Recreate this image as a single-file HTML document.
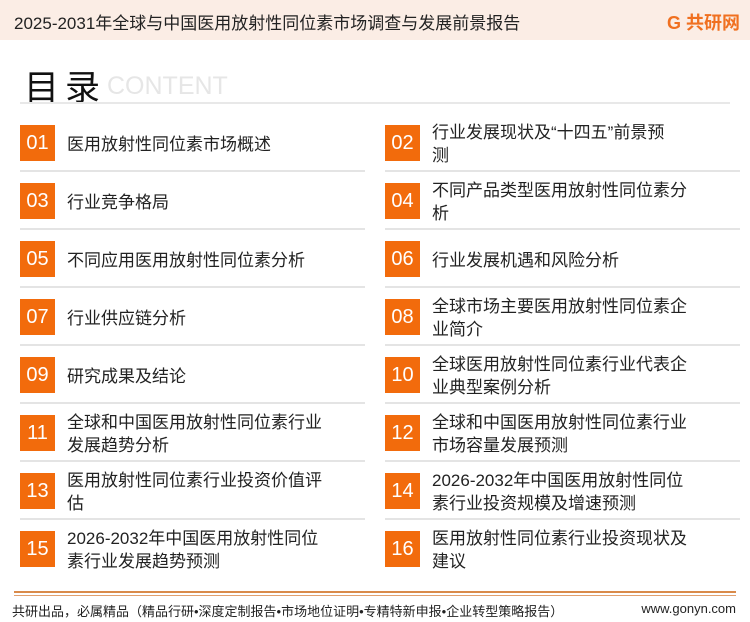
<!DOCTYPE html>
<html><head><meta charset="utf-8"><style>
*{margin:0;padding:0;box-sizing:border-box}
body{width:750px;height:622px;background:#fff;position:relative;overflow:hidden;font-family:"Liberation Sans","Noto Sans CJK SC",sans-serif;color:#222}
.hd{position:absolute;left:0;top:0;width:750px;height:40px;background:#fbede5}
.hd .t{position:absolute;left:14px;top:9px;font-size:17px;color:#222}
.logo{position:absolute;right:10px;top:9px;font-size:18px;font-weight:bold;color:#f07020}
.mulu{position:absolute;left:24px;top:60px;font-size:35px;color:#111;letter-spacing:6px}
.ct{position:absolute;left:107px;top:72px;font-size:25px;color:#e6e6e6}
.ln{position:absolute;left:20px;top:102px;width:710px;height:2px;background:#e8e8e8}
.b{position:absolute;width:35px;height:36px;background:#f26b0c;color:#fff;font-size:20px;text-align:center;line-height:36px}
.tx{position:absolute;font-size:17px;line-height:23px;color:#222;white-space:nowrap}
.sep{position:absolute;height:2px;background:#e4e4e4}
.f1{position:absolute;left:14px;top:591px;width:722px;height:2px;background:#d98a4a}
.f2{position:absolute;left:14px;top:595px;width:722px;height:1px;background:#e0a070}
.ft{position:absolute;left:12px;top:601px;font-size:13px;color:#222}
.fr{position:absolute;right:14px;top:601px;font-size:13px;color:#222}
</style></head><body>
<div class="hd"><div class="t">2025-2031年全球与中国医用放射性同位素市场调查与发展前景报告</div><div class="logo">G 共研网</div></div>
<div class="mulu">目录</div><div class="ct">CONTENT</div><div class="ln"></div>

<div class="b" style="left:20px;top:125px">01</div><div class="tx" style="left:67px;top:133px">医用放射性同位素市场概述</div>
<div class="b" style="left:385px;top:125px">02</div><div class="tx" style="left:432px;top:121px">行业发展现状及“十四五”前景预<br>测</div>
<div class="b" style="left:20px;top:183px">03</div><div class="tx" style="left:67px;top:191px">行业竞争格局</div>
<div class="b" style="left:385px;top:183px">04</div><div class="tx" style="left:432px;top:179px">不同产品类型医用放射性同位素分<br>析</div>
<div class="b" style="left:20px;top:241px">05</div><div class="tx" style="left:67px;top:249px">不同应用医用放射性同位素分析</div>
<div class="b" style="left:385px;top:241px">06</div><div class="tx" style="left:432px;top:249px">行业发展机遇和风险分析</div>
<div class="b" style="left:20px;top:299px">07</div><div class="tx" style="left:67px;top:307px">行业供应链分析</div>
<div class="b" style="left:385px;top:299px">08</div><div class="tx" style="left:432px;top:295px">全球市场主要医用放射性同位素企<br>业简介</div>
<div class="b" style="left:20px;top:357px">09</div><div class="tx" style="left:67px;top:365px">研究成果及结论</div>
<div class="b" style="left:385px;top:357px">10</div><div class="tx" style="left:432px;top:353px">全球医用放射性同位素行业代表企<br>业典型案例分析</div>
<div class="b" style="left:20px;top:415px">11</div><div class="tx" style="left:67px;top:411px">全球和中国医用放射性同位素行业<br>发展趋势分析</div>
<div class="b" style="left:385px;top:415px">12</div><div class="tx" style="left:432px;top:411px">全球和中国医用放射性同位素行业<br>市场容量发展预测</div>
<div class="b" style="left:20px;top:473px">13</div><div class="tx" style="left:67px;top:469px">医用放射性同位素行业投资价值评<br>估</div>
<div class="b" style="left:385px;top:473px">14</div><div class="tx" style="left:432px;top:469px">2026-2032年中国医用放射性同位<br>素行业投资规模及增速预测</div>
<div class="b" style="left:20px;top:531px">15</div><div class="tx" style="left:67px;top:527px">2026-2032年中国医用放射性同位<br>素行业发展趋势预测</div>
<div class="b" style="left:385px;top:531px">16</div><div class="tx" style="left:432px;top:527px">医用放射性同位素行业投资现状及<br>建议</div>

<div class="sep" style="left:20px;top:170px;width:345px"></div><div class="sep" style="left:385px;top:170px;width:355px"></div>
<div class="sep" style="left:20px;top:228px;width:345px"></div><div class="sep" style="left:385px;top:228px;width:355px"></div>
<div class="sep" style="left:20px;top:286px;width:345px"></div><div class="sep" style="left:385px;top:286px;width:355px"></div>
<div class="sep" style="left:20px;top:344px;width:345px"></div><div class="sep" style="left:385px;top:344px;width:355px"></div>
<div class="sep" style="left:20px;top:402px;width:345px"></div><div class="sep" style="left:385px;top:402px;width:355px"></div>
<div class="sep" style="left:20px;top:460px;width:345px"></div><div class="sep" style="left:385px;top:460px;width:355px"></div>
<div class="sep" style="left:20px;top:518px;width:345px"></div><div class="sep" style="left:385px;top:518px;width:355px"></div>

<div class="f1"></div><div class="f2"></div>
<div class="ft">共研出品，必属精品（精品行研•深度定制报告•市场地位证明•专精特新申报•企业转型策略报告）</div>
<div class="fr">www.gonyn.com</div>
</body></html>
